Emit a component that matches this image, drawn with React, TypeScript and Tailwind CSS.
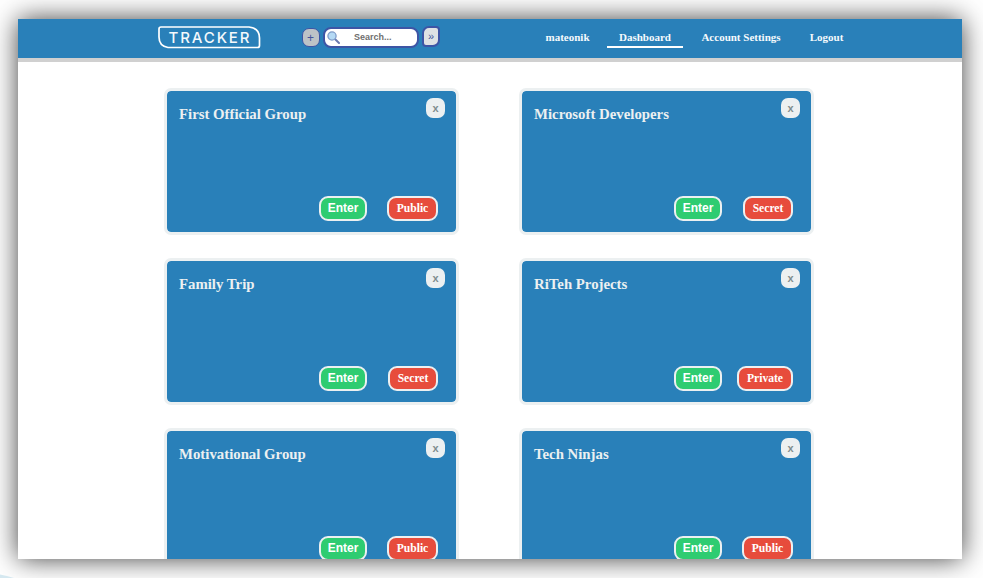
type Group = { name: string; access: 'Public' | 'Secret' | 'Private' };

const groups: Group[] = [
  { name: 'First Official Group', access: 'Public' },
  { name: 'Microsoft Developers', access: 'Secret' },
  { name: 'Family Trip', access: 'Secret' },
  { name: 'RiTeh Projects', access: 'Private' },
  { name: 'Motivational Group', access: 'Public' },
  { name: 'Tech Ninjas', access: 'Public' },
];

const accessWidth = { Public: 'w-[51px]', Secret: 'w-[50px]', Private: 'w-[56px]' };

function Logo() {
  return (
    <svg className="mt-[7px] h-[23px] w-[103px]" viewBox="0 0 103 23" fill="none">
      <path
        d="M3 1H91Q101.500 2 101.500 12V19.500Q101.500 21.500 99.500 21.500H10Q1 20 1 11V3Q1 1 3 1Z"
        stroke="#fff"
        strokeWidth="1.7"
      />
      <text
        x="10.500"
        y="16.500"
        fill="#f4f9fc"
        fontSize="15"
        fontWeight="500"
        fontFamily="Inter, 'Liberation Sans', sans-serif"
        textLength="81"
        lengthAdjust="spacing"
      >
        TRACKER
      </text>
    </svg>
  );
}

function SearchIcon() {
  return (
    <svg className="ml-[2px] h-[13px] w-[13px] shrink-0" viewBox="0 0 13 13" fill="none">
      <path d="M8.2 8.2L12 12" stroke="#6b7ab0" strokeWidth="2" strokeLinecap="round" />
      <circle cx="5" cy="5" r="4.1" fill="#b5daf5" stroke="#7f9cc9" strokeWidth="1.3" />
    </svg>
  );
}

function Header() {
  return (
    <header className="flex h-[43px] items-start border-b-4 border-[#d0d0d0] bg-[#2980b9] pl-[140px]">
      <Logo />
      <div className="ml-[41px] mt-[8px] flex items-start">
        <button className="mt-px flex h-[19px] w-[18px] items-center justify-center rounded-[7px] border-[1.5px] border-[#3d55a5] bg-[#bdc3c7] pr-px font-['Liberation_Sans',sans-serif] text-[12px] leading-none text-[#45559b]">
          +
        </button>
        <div className="ml-[3px] flex h-[21px] w-[96px] items-center rounded-[8px] border-2 border-[#3d55a5] bg-white">
          <SearchIcon />
          <span className="ml-[14px] font-['Liberation_Sans',sans-serif] text-[9px] font-bold leading-none text-[#6e6e6e]">
            Search...
          </span>
        </div>
        <button className="-mt-px ml-[3px] flex h-[21px] w-[18px] items-center justify-center rounded-[4px] rounded-br-[7px] rounded-tl-[7px] border-2 border-[#3d55a5] bg-[#dfe2e4] font-['Liberation_Sans',sans-serif] text-[11px] leading-none text-[#45559b]">
          »
        </button>
      </div>
      <nav className="ml-[105px] mt-[12px] flex whitespace-nowrap text-[11px] font-bold leading-[13px] text-[#f5fafd]">
        <a className="w-[45px] text-center">mateonik</a>
        <a className="ml-[17px] h-[17px] w-[76px] border-b-2 border-white text-center">Dashboard</a>
        <a className="ml-[18px] w-[80px] text-center">Account Settings</a>
        <a className="ml-[28px] w-[35px] text-center">Logout</a>
      </nav>
    </header>
  );
}

function GroupCard({ name, access }: Group) {
  return (
    <article className="flex h-[147px] w-[295px] flex-col justify-between rounded-[7px] border-[3px] border-[#ecf0f1] bg-[#2980b9] bg-clip-padding">
      <div className="flex justify-between pl-[12px] pr-[11px] pt-[7px]">
        <h2 className="mt-[7px] text-[14.8px] font-bold leading-[18px] text-[#ecf0f1]">{name}</h2>
        <button className="flex h-[20px] w-[19px] items-center justify-center rounded-[7px] bg-[#ecf0f1] font-['Liberation_Sans',sans-serif] text-[11px] font-bold leading-none text-[#7f8c8d]">
          x
        </button>
      </div>
      <div className="flex justify-between pb-[11px] pl-[152px] pr-[18px]">
        <button className="flex h-[25px] w-[48px] items-center justify-center rounded-[9px] border-2 border-[#ecf0f1] bg-[#2ecc71] pb-px font-['Liberation_Sans',sans-serif] text-[12px] font-bold leading-none text-white">
          Enter
        </button>
        <span
          className={`flex h-[25px] items-center justify-center rounded-[9px] border-2 border-[#ecf0f1] bg-[#e74c3c] text-[11.6px] font-bold leading-none text-white ${accessWidth[access]}`}
        >
          {access}
        </span>
      </div>
    </article>
  );
}

export default function App() {
  return (
    <div className="h-[578px] w-[983px] overflow-hidden bg-white pl-[18px] pt-[19px] font-['Liberation_Serif',serif]">
      <div className="h-[540px] w-[944px] overflow-hidden bg-white shadow-[0_0_25px_rgba(0,0,0,0.75)]">
        <Header />
        <main className="grid grid-cols-[295px_295px] gap-x-[60px] gap-y-[23px] pl-[146px] pt-[26px]">
          {groups.map((group) => (
            <GroupCard key={group.name} {...group} />
          ))}
        </main>
      </div>
      <svg className="mt-[15px] -ml-[18px] h-[4px] w-[14px]" viewBox="0 0 14 4">
        <path d="M0 0.500Q7 1.500 14 4H0Z" fill="#d5e8f0" />
      </svg>
    </div>
  );
}
